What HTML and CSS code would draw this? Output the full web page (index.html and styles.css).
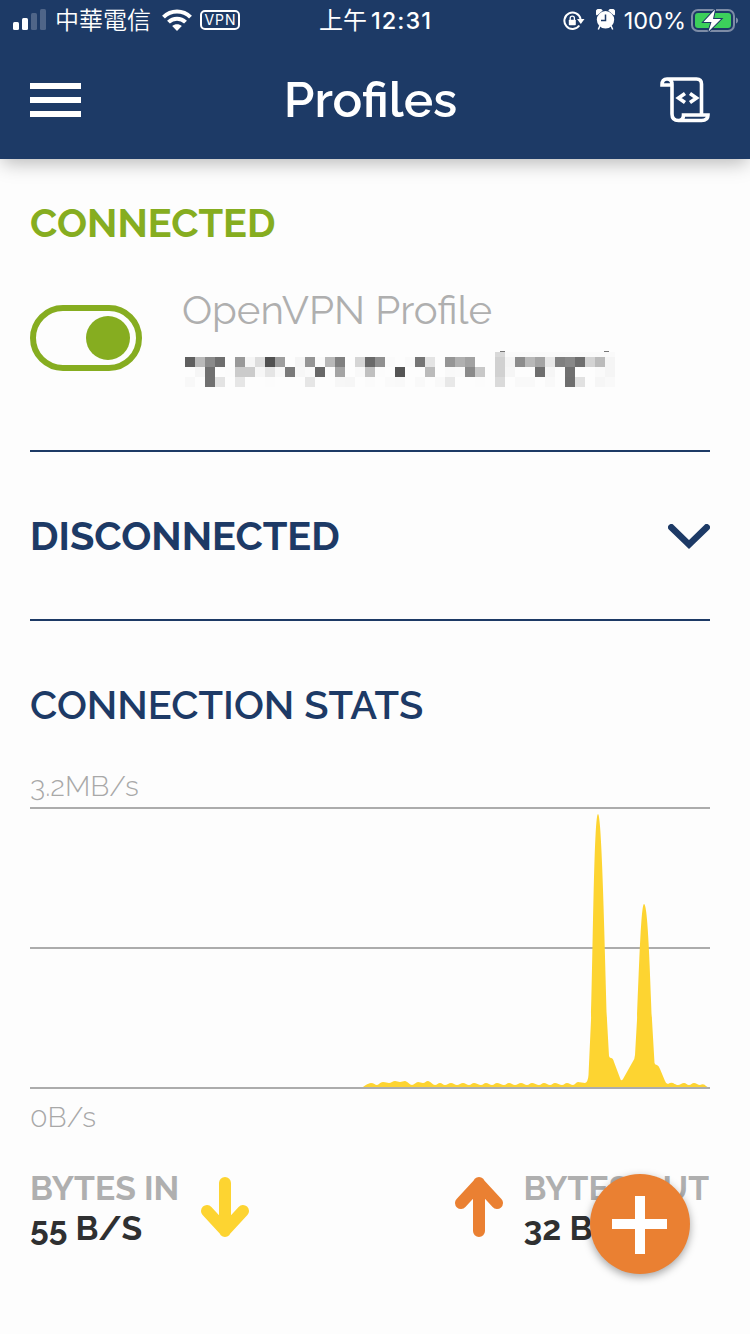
FILE: index.html
```html
<!DOCTYPE html>
<html lang="zh-Hant">
  <head>
    <meta charset="UTF-8">
    <meta name="viewport" content="width=device-width, initial-scale=1.0">
    <title>Profiles</title>
    <link rel="stylesheet" href="styles.css">
  </head>
  <body>
    <header class="header">
      <div class="status-bar">
        <div class="status-left">
          <svg class="signal" width="33" height="22" viewBox="0 0 33 22">
            <rect x="0" y="14" width="6" height="8" rx="1.5" fill="#fff"/>
            <rect x="9" y="10" width="6" height="12" rx="1.5" fill="#fff"/>
            <rect x="18" y="5" width="6" height="17" rx="1.5" fill="#4f6588"/>
            <rect x="27" y="1" width="6" height="21" rx="1.5" fill="#4f6588"/>
          </svg>
          <span class="carrier">中華電信</span>
          <svg class="wifi" width="30" height="22" viewBox="0 0 30 22" fill="none" stroke="#fff" stroke-width="4">
            <path d="M1.5 8.2C9 .6 21 .6 28.500 8.200"/>
            <path d="M6.500 13.200C11.200 8.500 18.800 8.500 23.500 13.200"/>
            <path d="M15 22l-4.800-5c2.700-2.400 6.900-2.400 9.600 0z" fill="#fff" stroke="none"/>
          </svg>
          <span class="vpn">VPN</span>
        </div>
        <div class="clock"><span class="clock-cjk">上午</span><span class="clock-time">12:31</span></div>
        <div class="status-right">
          <svg class="lock" width="22" height="20" viewBox="0 0 22 20">
            <path d="M16.300 14.500A8.200 8.200 0 1 1 17.600 8" fill="none" stroke="#fff" stroke-width="2"/>
            <path d="M14 8h7.500l-3.700 5z" fill="#fff"/>
            <rect x="5.800" y="8.700" width="7" height="5.600" rx=".8" fill="#fff"/>
            <path d="M7.200 9V7.300a2.100 2.100 0 0 1 4.200 0V9" fill="none" stroke="#fff" stroke-width="1.300"/>
          </svg>
          <svg class="alarm" width="19" height="21" viewBox="0 0 19 21">
            <circle cx="9.500" cy="10.800" r="8.700" fill="#fff"/>
            <path d="M1 5.500A3 3 0 0 1 5.700 1.500zM18 5.500A3 3 0 0 0 13.300 1.500zM2.300 20.500l1.500-3.500M16.700 20.500l-1.500-3.500" fill="#fff" stroke="#fff" stroke-width="1.500"/>
            <path d="M9.500 5.500v6H5" fill="none" stroke="#1d3a66" stroke-width="1.500"/>
          </svg>
          <span class="percent">100%</span>
          <svg class="battery" width="48" height="24" viewBox="0 0 48 24">
            <rect x="1" y="1" width="42" height="21" rx="6" fill="none" stroke="#7d8ca6" stroke-width="2"/>
            <path d="M45 8.500c2.800 1 2.800 5 0 6z" fill="#7d8ca6"/>
            <rect x="4" y="4" width="36" height="15" rx="3" fill="#3ccf5b"/>
            <path d="M24 .5L12.500 13h8L17.500 22.500 30 10h-8z" fill="#fff" stroke="#1d3a66" stroke-width="2" paint-order="stroke"/>
          </svg>
        </div>
      </div>
      <div class="nav">
        <div class="menu"><i></i><i></i><i></i></div>
        <h1 class="title">Profiles</h1>
        <svg class="script-icon" width="50" height="47" viewBox="0 0 50 47" fill="none" stroke="#fff" stroke-width="3.600">
          <path d="M7 2H36.500Q41.500 2 41.500 7V38M7 2Q2 2 2 8H12V7.500Q12 2 7 2M12 8V37Q12 43.500 18.500 43.500H41.500Q48 43.500 48 38H23.500Q23.500 43.500 18.500 43.500"/>
          <path d="M25 16.500l-6.500 4.500 6.500 4.500M30 16.500l6.500 4.500-6.500 4.500"/>
        </svg>
      </div>
    </header>

    <main class="content">
      <section class="connected">
        <h2 class="heading heading-on">CONNECTED</h2>
        <div class="profile">
          <div class="toggle"><div class="knob"></div></div>
          <div class="profile-info">
            <p class="profile-name">OpenVPN Profile</p>
            <!-- server name, masked with 10px blocks -->
            <svg class="mask" width="430" height="36" viewBox="0 0 430 36" shape-rendering="crispEdges"></svg>
          </div>
        </div>
      </section>

      <section class="disconnected">
        <h2 class="heading heading-off">DISCONNECTED</h2>
        <svg class="chevron" width="42" height="26" viewBox="0 0 42 26" fill="none" stroke="#1d3a66" stroke-width="6.500" stroke-linecap="round">
          <path d="M3.300 3.300L21 20.500 38.700 3.300"/>
        </svg>
      </section>

      <section class="stats">
        <h2 class="heading heading-stats">CONNECTION STATS</h2>
        <p class="scale scale-top">3.2MB/s</p>
        <svg class="chart" width="680" height="282" viewBox="0 0 680 282">
          <path d="M0 1H680M0 141H680" stroke="#acacac" stroke-width="2"/>
          <path fill="#fdd431" d="M333 280S338 276 341 276 345 278 347 278 350 275 353 275 357 276 359 276 363 274 365 274 368 275 370 275 373 274 375 274 380 278 382 278 386 275 388 275 391 276 393 276 396 274 398 274 403 278 405 278 408 276 410 276 413 278 415 278 419 276 421 276 425 278 427 278 431 276 433 276 437 278 439 278 442 276 444 276 449 278 451 278 454 276 456 276 460 278 462 278 465 276 467 276 472 278 474 278 477 276 479 276 483 278 485 278 489 276 491 276 495 278 497 278 500 276 502 276 507 278 509 278 512 276 514 276 518 278 520 278 523 276 525 276 530 278 532 278 535 276 537 276 541 278 543 278 546 275 548 275 553 276 555 276Q558 275 558.500 268L561 213C563 150 564 7 568 7C572 7 575 150 577 213L579 249Q579.500 251 581 251Q583 251 584 255L590 271Q591 275 593 272L602 256Q605 252 605 248L607 213C609 165 611 97 614 97C618 97 620 165 622 213L624.500 256Q625 258 627 258Q629 259 630 262L635 274Q636 277 638 277Q641 275 643 276S646 278 648 278 652 276 654 276 657 278 659 278 662 276 664 276 668 278 670 278Q674 276 676 279L679 281H333z"/>
          <path d="M0 281H680" stroke="#acacac" stroke-width="2"/>
        </svg>
        <p class="scale scale-bottom">0B/s</p>

        <div class="bytes">
          <div class="bytes-in">
            <div>
              <p class="bytes-label">BYTES IN</p>
              <p class="bytes-value">55 B/S</p>
            </div>
            <svg width="48" height="60" viewBox="0 0 48 60" fill="none" stroke="#fdd431" stroke-width="12" stroke-linecap="round" stroke-linejoin="round">
              <path d="M24 6V54M6 34L24 53.500 42 34"/>
            </svg>
          </div>
          <div class="bytes-out">
            <svg width="48" height="60" viewBox="0 0 48 60" fill="none" stroke="#ea8032" stroke-width="12" stroke-linecap="round" stroke-linejoin="round">
              <path d="M24 54V6M6 26L24 6.500 42 26"/>
            </svg>
            <div>
              <p class="bytes-label">BYTES OUT</p>
              <p class="bytes-value">32 B/S</p>
            </div>
          </div>
        </div>
      </section>
    </main>

    <button class="add">
      <svg width="56" height="58" viewBox="0 0 56 58" stroke="#fff" stroke-width="10">
        <path d="M28 0V58M0 28H55"/>
      </svg>
    </button>

    <script src="script.js"></script>
  </body>
</html>
```

FILE: styles.css
```css
* {
    box-sizing: border-box;
}

body {
    margin: 0;
    width: 750px;
    height: 1334px;
    overflow: hidden;
    background-color: #fdfdfd;
    font-family: Raleway, Lato, "Noto Sans CJK TC", sans-serif;
    color: #2f3031;
}

h1, h2, p {
    margin: 0;
    white-space: nowrap;
}

svg {
    display: block;
    flex: none;
}

.header {
    position: relative;
    height: 159px;
    background-color: #1d3a66;
    color: white;
    box-shadow: 0 6px 18px -2px rgba(0, 0, 0, 0.28);
}

.status-bar {
    display: grid;
    grid-template-columns: 1fr auto 1fr;
    height: 40px;
    padding: 0 11px 0 13px;
    font-family: Inter, "Noto Sans CJK TC", sans-serif;
    font-size: 24px;
    line-height: 40px;
}

.status-left, .status-right, .clock {
    display: flex;
    align-items: center;
}

.status-right {
    justify-content: flex-end;
}

.signal {
    margin: -3px 9px 0 0;
}

.carrier {
    padding-top: 1px;
    font-weight: 350;
}

.wifi {
    margin: -1px 8px 0 11px;
}

.vpn {
    width: 40px;
    height: 20px;
    margin-top: -1px;
    border: 2px solid white;
    border-radius: 5px;
    font-size: 14px;
    font-weight: 400;
    line-height: 16px;
    letter-spacing: 1px;
    text-indent: 1px;
    text-align: center;
}

.clock {
    padding-right: 1px;
}

.clock-time {
    margin-left: 4px;
    font-size: 23.5px;
    font-weight: 500;
    letter-spacing: 1px;
}

.alarm {
    margin: -2px 9px 0 11px;
}

.percent {
    padding-top: 1px;
    margin-right: 5px;
    font-size: 23.5px;
}

.nav {
    display: flex;
    align-items: center;
    justify-content: space-between;
    height: 119px;
    padding: 0 40px 0 30px;
}

.menu {
    display: grid;
    gap: 8px;
    width: 51px;
}

.menu i {
    height: 6px;
    background-color: white;
}

.title {
    font-size: 49.4px;
    font-weight: 600;
    line-height: 60px;
}

.script-icon {
    margin-top: 2px;
}

.content {
    padding: 0 40px 0 30px;
}

.heading {
    font-size: 39.8px;
    font-weight: 700;
    line-height: 48px;
    color: #1d3a66;
}

.heading-on {
    color: #86ad20;
}

.heading-stats {
    font-weight: 600;
}

.connected {
    height: 293px;
    padding-top: 40px;
    border-bottom: 2px solid #1d3a66;
}

.profile {
    display: flex;
    gap: 40px;
    margin-top: 39px;
}

.toggle {
    width: 112px;
    height: 66px;
    margin-top: 19px;
    padding: 5px 6px;
    border: 6px solid #86ad20;
    border-radius: 33px;
}

.knob {
    width: 44px;
    height: 44px;
    margin-left: auto;
    border-radius: 50%;
    background-color: #86ad20;
}

.profile-name {
    font-size: 40.2px;
    line-height: 48px;
    color: #afafaf;
}

.mask {
    margin: 17px 0 0 3px;
}

.disconnected {
    display: flex;
    align-items: center;
    justify-content: space-between;
    height: 169px;
    border-bottom: 2px solid #1d3a66;
}

.chevron {
    margin-top: 2px;
}

.stats {
    padding-top: 60px;
}

.scale {
    font-size: 28.8px;
    font-weight: 300;
    line-height: 36px;
    color: #a8a8a8;
}

.scale-top {
    margin-top: 39px;
}

.scale-bottom {
    margin-top: 10px;
}

.chart {
    margin-top: 3px;
}

.bytes {
    display: flex;
    justify-content: space-between;
    margin-top: 33px;
}

.bytes-in, .bytes-out {
    display: flex;
    gap: 22px;
}

.bytes-out {
    gap: 21px;
    margin-right: 1px;
}

.bytes svg {
    margin-top: 9px;
}

.bytes-label, .bytes-value {
    font-size: 33.7px;
    font-weight: 700;
    line-height: 40px;
}

.bytes-label {
    color: #afafaf;
}

.add {
    position: absolute;
    left: 590px;
    top: 1174px;
    width: 100px;
    height: 100px;
    padding: 2px 0 0;
    border: none;
    border-radius: 50%;
    background-color: #ea8032;
    box-shadow: 0 3px 9px rgba(0, 0, 0, 0.35);
}

.add svg {
    margin: 0 auto;
}
```

FILE: script.js
```js
const rows = [
  { y: 6, cells: '5f b9 8a 6e .. 99 f6 dd 50 9e .. f5 95 fa b8 80 .. d5 69 90 fb .. fa 75 e4 .. 95 b0 a2 .. .. d1 f4 8c b8 a4 e8 80 88 6e d3 bb f5' },
  { y: 16, cells: '.. f6 70 .. fc cb cb f7 e5 f8 7a f7 fa 68 fc a4 .. f9 c0 fc .. 55 .. .. bb .. f9 fa 8a c8 .. d1 f6 .. .. 6e f6 .. 70 .. .. fa f5' },
  { y: 26, cells: 'f8 .. 70 e3 .. e6 .. .. fc .. .. .. e6 .. .. f7 f6 .. fb .. fa f9 .. f9 .. f9 e8 .. .. fc .. da .. f9 f9 .. f9 .. 6e e1 .. f6 f9' }
];

let blocks = '<rect x="310" y="1" width="10" height="5" fill="#d9d9d9"/><rect x="320" y="1" width="110" height="5" fill="#fafafa"/><rect x="315" width="5" height="1" fill="#777"/><rect x="419" width="5" height="1" fill="#777"/>';

rows.forEach(row => {
  row.cells.split(' ').forEach((shade, i) => {
    if (shade !== '..') {
      blocks += `<rect x="${i * 10}" y="${row.y}" width="10" height="10" fill="#${shade + shade + shade}"/>`;
    }
  });
});

document.querySelector('.mask').innerHTML = blocks;
```
